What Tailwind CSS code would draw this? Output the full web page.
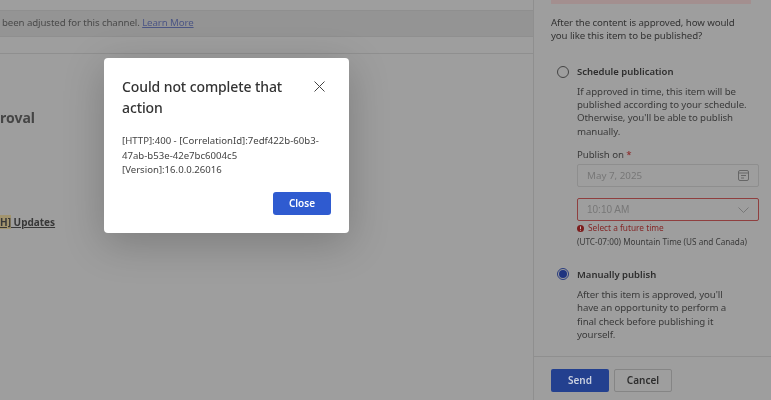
<!DOCTYPE html>
<html>
<head>
<meta charset="utf-8">
<script src="https://cdn.jsdelivr.net/npm/@tailwindcss/browser@4"></script>
</head>
<body class="w-[771px] h-[400px] overflow-hidden font-['Noto_Sans',sans-serif] bg-[#9e9e9e]">
<div class="relative w-[771px] h-[400px] flex bg-[#9e9e9e] blur-[0.35px]">
  <main class="w-[533px] h-full overflow-hidden bg-[#9e9e9e] pt-[10px]">
    <div class="h-[27px] bg-[#949494] border-y border-[#8f8f8f] flex items-center text-[9.7px] tracking-[-0.1px] text-[#4a4a4a] whitespace-nowrap">
      <span class="pl-[2px]">been adjusted for this channel. <a class="text-[#4c5685] underline">Learn More</a></span>
    </div>
    <div class="h-[17px] border-b border-[#8f8f8f]"></div>
    <h2 class="mt-[54px] text-[14px] leading-[20px] font-bold text-[#454545]">roval</h2>
    <p class="mt-[86px] text-[10px] leading-[16px] font-bold text-[#383838] underline"><span class="bg-[#a2946e]">H]</span> Updates</p>
  </main>
  <aside class="w-[238px] h-full border-l border-[#8f8f8f] flex flex-col bg-[#9e9e9e]">
    <div class="flex-1 px-[17px] min-h-0">
      <div class="h-[4px] w-[200px] bg-[#a38f8f]"></div>
      <p class="mt-[12px] w-[200px] text-[9.7px] tracking-[-0.1px] leading-[13.4px] text-[#333]">After the content is approved, how would you like this item to be published?</p>
      <div class="mt-[21px] flex gap-[8px] pl-[6px]">
        <span class="mt-[2px] w-[12px] h-[12px] shrink-0 rounded-full border border-[#444]"></span>
        <div class="w-[184px]">
          <div class="text-[9.5px] leading-[16px] font-semibold text-[#2e2e2e]">Schedule publication</div>
          <p class="mt-[5px] text-[9.7px] tracking-[-0.1px] leading-[13.3px] text-[#3a3a3a]">If approved in time, this item will be published according to your schedule. Otherwise, you'll be able to publish manually.</p>
          <div class="mt-[9px] text-[9.7px] tracking-[-0.1px] leading-[16px] text-[#3a3a3a]">Publish on <span class="text-[#8a2020]">*</span></div>
          <div class="mt-[1px] w-[182px] h-[23px] rounded-[2px] border border-[#8e8e8e] flex items-center justify-between pl-[9px] pr-[9px] text-[9.8px] text-[#777]">
            <span class="pt-[1px]">May 7, 2025</span>
            <svg class="w-[11px] h-[11px]" viewBox="0 0 11 11" fill="none" stroke="#666"><rect x=".5" y=".5" width="10" height="10" rx="1.5"/><path d="M.5 3h10M3 5.5h5M3 8h3"/></svg>
          </div>
          <div class="mt-[11px] w-[182px] h-[23px] rounded-[2px] border border-[#8f3f3f] flex items-center justify-between pl-[9px] pr-[9px] text-[10px] text-[#777]">
            <span class="font-['Liberation_Sans',sans-serif]">10:10 AM</span>
            <svg class="w-[11px] h-[6px]" viewBox="0 0 11 6" fill="none" stroke="#777"><path d="M.5.5l5 5 5-5"/></svg>
          </div>
          <div class="flex items-center gap-[4px] text-[8.3px] leading-[14px] text-[#842626]">
            <svg class="w-[7px] h-[7px]" viewBox="0 0 8 8"><circle cx="4" cy="4" r="4" fill="#7c1d1d"/><path d="M4 1.6v3M4 5.5v1" stroke="#ccc" fill="none"/></svg>
            <span>Select a future time</span>
          </div>
          <div class="text-[8.2px] leading-[13px] text-[#3a3a3a] whitespace-nowrap">(UTC-07:00) Mountain Time (US and Canada)</div>
        </div>
      </div>
      <div class="mt-[19px] flex gap-[8px] pl-[6px]">
        <span class="mt-[1px] w-[12px] h-[12px] shrink-0 rounded-full border border-[#2a3c7e] flex items-center justify-center"><span class="w-[8px] h-[8px] rounded-full bg-[#1f3480]"></span></span>
        <div class="w-[160px]">
          <div class="text-[9.5px] leading-[16px] font-semibold text-[#2e2e2e]">Manually publish</div>
          <p class="mt-[5px] text-[9.7px] tracking-[-0.1px] leading-[13.3px] text-[#3a3a3a]">After this item is approved, you'll have an opportunity to perform a final check before publishing it yourself.</p>
        </div>
      </div>
    </div>
    <div class="h-[44px] shrink-0 border-t border-[#8f8f8f] flex items-start gap-[5px] px-[17px] pt-[12px]">
      <button class="w-[58px] h-[23px] rounded-[2px] bg-[#23408f] text-[#c9cfe0] text-[10px] font-semibold">Send</button>
      <button class="w-[58px] h-[23px] rounded-[2px] border border-[#858585] text-[#2e2e2e] text-[10px] font-semibold">Cancel</button>
    </div>
  </aside>
  <div class="absolute left-[104px] top-[58px] w-[245px] h-[175px] bg-white rounded-[4px] shadow-[0_10px_40px_rgba(0,0,0,0.22)] pl-[18px] pr-[18px] pt-[19px]">
    <div class="flex justify-between items-start">
      <h1 class="w-[175px] text-[14px] tracking-[-0.1px] leading-[20.5px] font-medium text-[#333]">Could not complete that action</h1>
      <svg class="w-[11px] h-[11px] mt-[4px] mr-[6px]" viewBox="0 0 11 11" fill="none" stroke="#444"><path d="M.5.5l10 10M10.5.5l-10 10"/></svg>
    </div>
    <p class="mt-[16px] text-[9.6px] leading-[14.5px] text-[#444]">[HTTP]:400 - [CorrelationId]:7edf422b-60b3-47ab-b53e-42e7bc6004c5<br>[Version]:16.0.0.26016</p>
    <div class="mt-[14px] flex justify-end">
      <button class="w-[58px] h-[23px] rounded-[3px] bg-[#2f5bd0] text-white text-[10px] font-semibold">Close</button>
    </div>
  </div>
</div>
</body>
</html>
